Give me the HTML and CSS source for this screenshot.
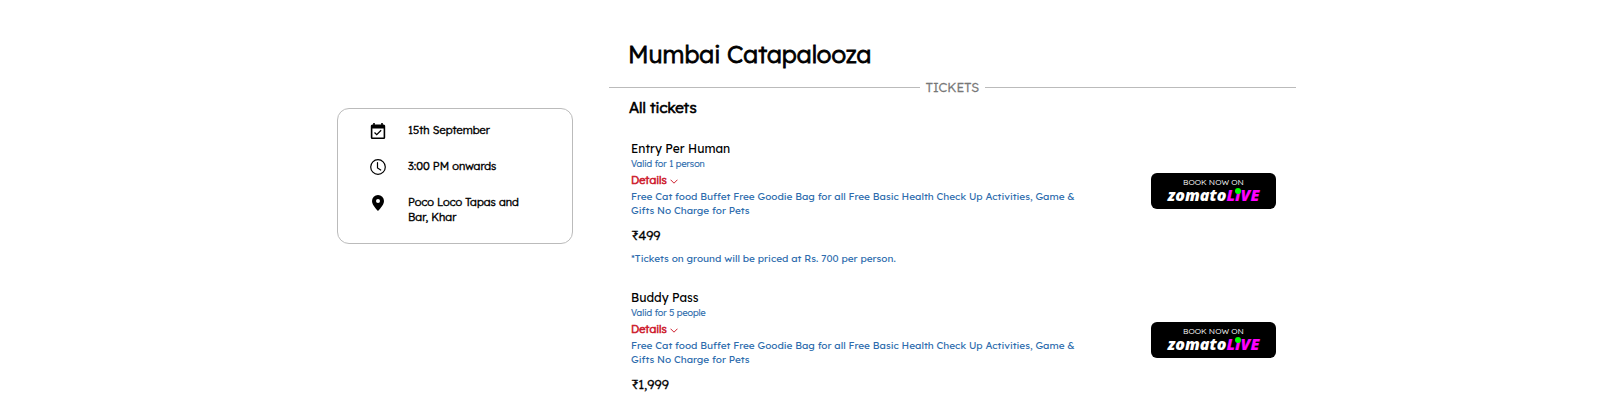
FILE: index.html
```html
<!DOCTYPE html>
<html lang="en">
<head>
    <meta charset="UTF-8">
    <meta name="viewport" content="width=device-width, initial-scale=1.0">
    <title>Mumbai Catapalooza</title>
    <link rel="stylesheet" href="styles.css">
</head>
<body>
    <div class="container">
        <aside class="info-card">
            <div class="info-row">
                <svg class="icon" viewBox="3 1 18 20"><path d="M16.500 10.600l-1.100-1.100-5 5-2.200-2.200-1.100 1.100 3.300 3.300zM19 3h-1V1h-2v2H8V1H6v2H5c-1.100 0-2 .9-2 2v14c0 1.100.9 2 2 2h14c1.100 0 2-.9 2-2V5c0-1.100-.9-2-2-2zm0 16H5V8h14z"/></svg>
                <span>15th September</span>
            </div>
            <div class="info-row">
                <svg class="icon" viewBox="0 0 16 16"><path d="M7.500 3.500V9l3.200 2" fill="none" stroke="#000" stroke-width="1.200" stroke-linecap="round"/><circle cx="8" cy="8" r="7.300" fill="none" stroke="#000" stroke-width="1.200"/></svg>
                <span>3:00 PM onwards</span>
            </div>
            <div class="info-row">
                <svg class="icon" viewBox="0 0 16 16"><path d="M8 16s6-5.686 6-10A6 6 0 0 0 2 6c0 4.314 6 10 6 10m0-8a2 2 0 1 1 0-4 2 2 0 0 1 0 4"/></svg>
                <span>Poco Loco Tapas and Bar, Khar</span>
            </div>
        </aside>
        <main>
            <h1>Mumbai Catapalooza</h1>
            <div class="divider"><span>TICKETS</span></div>
            <h2>All tickets</h2>
            <section class="ticket">
                <div class="ticket-info">
                    <h3>Entry Per Human</h3>
                    <p class="valid">Valid for 1 person</p>
                    <button class="details" type="button">Details <svg viewBox="0 0 8 5"><path d="M.5.7L4 4.200 7.500.7"/></svg></button>
                    <p class="desc">Free Cat food Buffet Free Goodie Bag for all Free Basic Health Check Up Activities, Game &amp; Gifts No Charge for Pets</p>
                    <p class="price">₹499</p>
                    <p class="desc">*Tickets on ground will be priced at Rs. 700 per person.</p>
                </div>
                <a class="book" href="#"><span class="book-label">BOOK NOW ON</span><span class="brand">zomato<span class="live">L<span class="mic">I</span>VE</span></span></a>
            </section>
            <section class="ticket">
                <div class="ticket-info">
                    <h3>Buddy Pass</h3>
                    <p class="valid">Valid for 5 people</p>
                    <button class="details" type="button">Details <svg viewBox="0 0 8 5"><path d="M.5.7L4 4.200 7.500.7"/></svg></button>
                    <p class="desc">Free Cat food Buffet Free Goodie Bag for all Free Basic Health Check Up Activities, Game &amp; Gifts No Charge for Pets</p>
                    <p class="price">₹1,999</p>
                </div>
                <a class="book" href="#"><span class="book-label">BOOK NOW ON</span><span class="brand">zomato<span class="live">L<span class="mic">I</span>VE</span></span></a>
            </section>
        </main>
    </div>
</body>
</html>
```
FILE: styles.css
```css
* {
    box-sizing: border-box;
}
body {
    font-family: Lexend, Inter, "Noto Sans", sans-serif;
    font-weight: 300;
    margin: 0;
    color: #000;
    background-color: #fff;
}
h1, h2, h3, p {
    margin: 0;
    font-weight: 300;
}
.container {
    display: grid;
    grid-template-columns: 237px 1fr;
    gap: 36px;
    align-items: start;
    padding: 35px 19% 0 21%;
}
.info-card {
    display: flex;
    flex-direction: column;
    gap: 20px;
    margin: 73px 0 0 1px;
    padding: 14px 32px 18px;
    border: 1px solid #bbb;
    border-radius: 12px;
    font-size: 11px;
    line-height: 15px;
    -webkit-text-stroke: 0.4px #000;
}
.info-row {
    display: flex;
    gap: 22px;
}
.icon {
    width: 16px;
    height: 16px;
    flex: none;
}
h1 {
    padding-left: 19px;
    font-size: 24px;
    line-height: 38px;
    -webkit-text-stroke: 0.8px #000;
}
.divider {
    display: flex;
    align-items: center;
    gap: 6px;
    margin-top: 6px;
    color: #777;
    font-size: 13px;
    line-height: 16px;
    -webkit-text-stroke: 0.3px #777;
}
.divider::before, .divider::after {
    content: "";
    flex: 1;
    border-top: 1px solid #bbb;
}
h2 {
    padding-left: 20px;
    margin: 3px 0 23px;
    font-size: 15px;
    line-height: 20px;
    -webkit-text-stroke: 0.7px #000;
}
.ticket {
    display: flex;
    justify-content: space-between;
    align-items: flex-start;
    padding: 0 20px 0 22px;
    margin-bottom: 24px;
}
.ticket-info {
    width: 460px;
}
h3 {
    font-size: 12px;
    line-height: 16px;
    font-weight: 400;
}
.valid {
    font-size: 9px;
    line-height: 14px;
    color: #2d6cad;
    -webkit-text-stroke: 0.2px #2d6cad;
}
.details {
    display: flex;
    align-items: center;
    gap: 3px;
    padding: 0;
    border: 0;
    background: none;
    font-family: inherit;
    font-size: 11px;
    line-height: 19px;
    font-weight: 300;
    color: #ce202f;
    -webkit-text-stroke: 0.6px #ce202f;
}
.details svg {
    width: 8px;
    height: 5px;
    margin-top: 2px;
    fill: none;
    stroke: #ce202f;
}
.desc {
    font-size: 10px;
    line-height: 14px;
    font-weight: 400;
    color: #2d6cad;
}
.price {
    margin: 9px 0;
    font-size: 13px;
    line-height: 16px;
    -webkit-text-stroke: 0.3px #000;
}
.book {
    display: flex;
    flex-direction: column;
    align-items: center;
    width: 125px;
    height: 36px;
    margin-top: 32px;
    padding-top: 4px;
    border-radius: 6px;
    background: #000;
    color: #fff;
    text-decoration: none;
}
.book-label {
    font-size: 8px;
    line-height: 10px;
}
.brand {
    font-family: "Open Sans", sans-serif;
    font-size: 16px;
    line-height: 16px;
    font-weight: 800;
    font-style: italic;
}
.live {
    color: #f0f;
}
.mic {
    position: relative;
}
.mic::before {
    content: "";
    position: absolute;
    top: 4px;
    left: 0;
    width: 6px;
    height: 6px;
    border-radius: 50%;
    background: #0f0;
}
```
